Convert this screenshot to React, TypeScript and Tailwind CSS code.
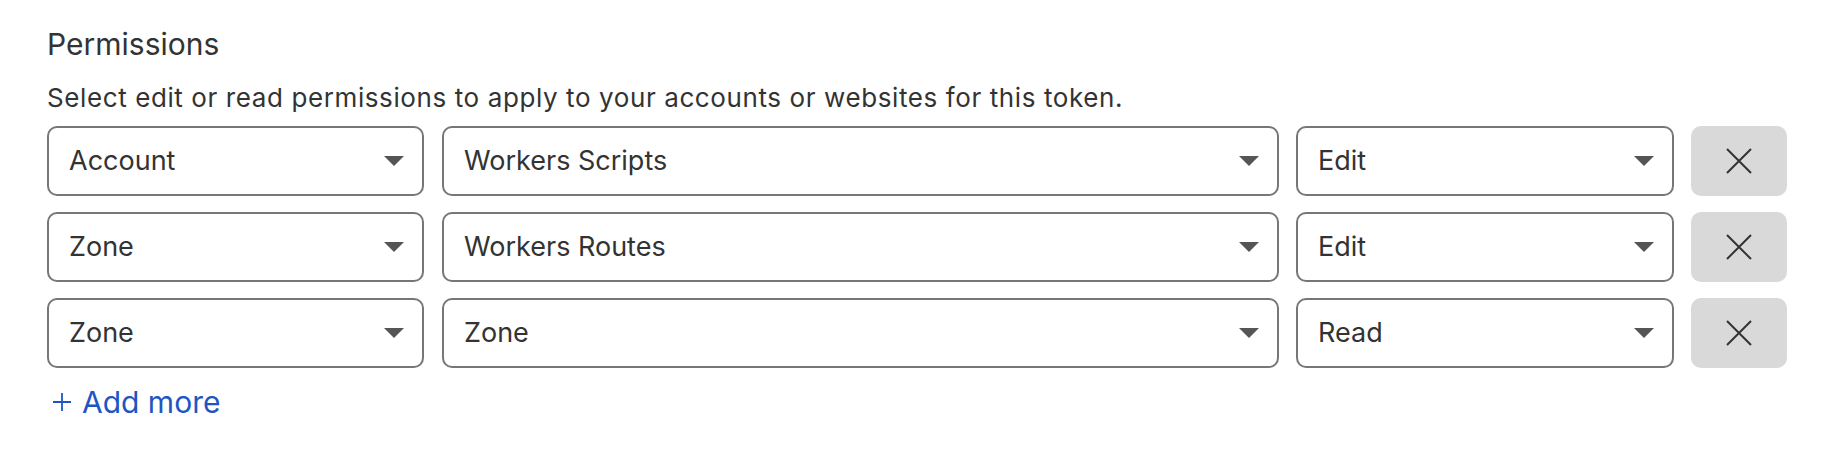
const rows = [
  { scope: 'Account', item: 'Workers Scripts', access: 'Edit' },
  { scope: 'Zone', item: 'Workers Routes', access: 'Edit' },
  { scope: 'Zone', item: 'Zone', access: 'Read' },
]

function Select({ value, width }: { value: string; width: string }) {
  return (
    <div
      className={`${width} h-[70px] shrink-0 flex items-center justify-between border-2 border-[#777777] rounded-[10px] pl-[20px] pr-[18px] bg-white`}
    >
      <span className="text-[27px] text-[#333333]">{value}</span>
      <svg width="20" height="10" viewBox="0 0 20 10">
        <path d="M0 0 L20 0 L10 10 Z" fill="#555555" />
      </svg>
    </div>
  )
}

export default function App() {
  return (
    <div className="w-[1828px] h-[458px] bg-white pl-[47px] pt-[26px] font-['Inter',sans-serif]">
      <h2 className="text-[30px] leading-[36px] text-[#333333]">Permissions</h2>
      <p className="mt-[20px] text-[26px] leading-[32px] tracking-[0.6px] text-[#333333]">
        Select edit or read permissions to apply to your accounts or websites for this token.
      </p>
      <div className="mt-[12px] flex flex-col gap-[16px]">
        {rows.map((row, i) => (
          <div key={i} className="flex">
            <Select value={row.scope} width="w-[377px]" />
            <div className="w-[18px] shrink-0" />
            <Select value={row.item} width="w-[837px]" />
            <div className="w-[17px] shrink-0" />
            <Select value={row.access} width="w-[378px]" />
            <div className="w-[17px] shrink-0" />
            <button className="w-[96px] h-[70px] shrink-0 rounded-[10px] bg-[#d9d9d9] flex items-center justify-center">
              <svg width="26" height="26" viewBox="0 0 26 26">
                <path d="M1 1 L25 25 M25 1 L1 25" stroke="#333333" strokeWidth="2" />
              </svg>
            </button>
          </div>
        ))}
      </div>
      <button className="mt-[16px] ml-[6px] flex items-center gap-[11px] text-[30px] leading-[36px] text-[#1d56c4]">
        <svg width="18" height="18" viewBox="0 0 18 18">
          <path d="M9 0 V18 M0 9 H18" stroke="#1d56c4" strokeWidth="1.8" />
        </svg>
        <span>Add more</span>
      </button>
    </div>
  )
}
